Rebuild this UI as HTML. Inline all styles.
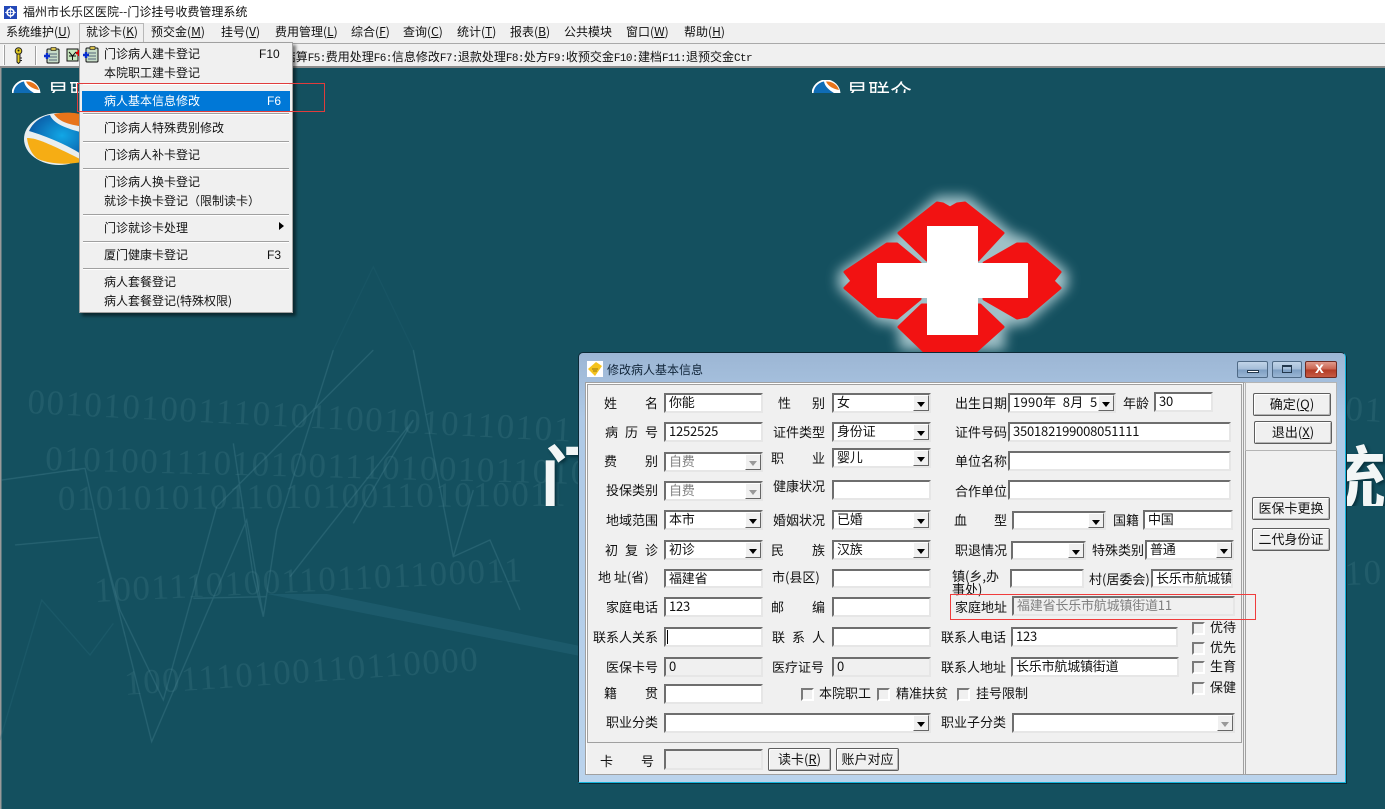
<!DOCTYPE html>
<html lang="zh-CN"><head><meta charset="utf-8"><title>福州市长乐区医院--门诊挂号收费管理系统</title>
<style>
html,body{margin:0;padding:0;width:1385px;height:809px;overflow:hidden;background:#14505f}
body{position:relative;font:12px/14px "WenQuanYi Zen Hei","Noto Sans CJK SC",sans-serif;color:#111}
div,span,b{position:absolute;box-sizing:border-box;white-space:pre}
i{font:normal 11px "Liberation Mono",monospace;letter-spacing:-.6px}
u{text-decoration:underline}
.m{top:25px;line-height:14px}
.mi{left:104px;line-height:14px}
.sep{left:83px;width:206px;height:2px;background:#a0a0a0;border-bottom:1px solid #fff}
.sc{left:269px;font:12px/14px "Liberation Sans",sans-serif}
.l{font-size:13px;line-height:14px;color:#111}
.i{background:#fff;border:2px solid;border-color:#6e6e6e #e6e6e6 #e6e6e6 #6e6e6e;font-size:13px;line-height:14px;padding-left:3px;overflow:hidden;letter-spacing:-.2px;color:#111}
.i.g{color:#808080}.i.d{background:#f0f0f0}
.a{right:0;top:0;bottom:0;width:16px;background:#f0f0f0;border:1px solid;border-color:#fff #666 #666 #fff}
.a:after{content:"";position:absolute;left:3px;top:6px;border:4px solid transparent;border-top:5px solid #000;border-bottom:0}
.a.n:after{border-top-color:#999}
.c{width:13px;height:13px;background:#f0f0f0;border:2px solid;border-color:#7a7a7a #fff #fff #7a7a7a}
.b{background:#f0f0f0;border:1px solid #5e5e5e;border-radius:2px;box-shadow:inset 1px 1px 0 #fff,inset -1px -1px 0 #b4b4b4;text-align:center;font-size:13px;line-height:20px;color:#111}
.wb{top:361px;height:17px;border:1px solid #4f6a86;border-radius:2px;background:linear-gradient(#c1d4e8,#a3bcd8 50%,#7d9ec2 51%,#9ab6d4)}
</style></head><body>

<!-- background -->
<svg style="position:absolute;left:0;top:68px" width="1385" height="741" viewBox="0 68 1385 741">
<defs><filter id="gl" x="-30%" y="-30%" width="160%" height="160%"><feGaussianBlur stdDeviation="6"/></filter>
<radialGradient id="bl" cx=".6" cy=".5" r=".6"><stop offset="0" stop-color="#11a7e6"/><stop offset="1" stop-color="#0b5ea8"/></radialGradient></defs>
<rect x="0" y="68" width="1385" height="741" fill="#14505f"/>
<rect x="0" y="68" width="1.500" height="741" fill="#9a9a9a"/>
<g font-family="Liberation Serif,serif" font-size="35" fill="#6ea2ae" opacity=".15" letter-spacing="1.500">
<text transform="translate(27,413) rotate(3)">00101010011101011001010110101</text>
<text transform="translate(45,470) rotate(1.500)">01010011101010011101001011010</text>
<text transform="translate(58,510) rotate(-.5)">010101010110101001101010011</text>
<text transform="translate(95,602) rotate(-2.800)">10011101001101101100011</text>
<text transform="translate(125,695) rotate(-4)">1001110100110110000</text>
<text transform="translate(1345,420) rotate(3)">0101</text>
<text transform="translate(1345,585) rotate(-2)">1011</text>
</g>
<g transform="translate(0,350) scale(.3333)" fill="none" stroke="#4d8796" stroke-width="4" opacity=".36">
<polyline points="5,390 255,355 300,560 455,1175 740,510 790,800 830,540 1000,0"/>
<polyline points="300,560 360,780 490,1050 650,470 1120,0"/>
<polyline points="870,680 1240,210 1060,520"/>
<polyline points="1240,0 1360,620 1470,570 1560,780"/>
<polyline points="1360,620 1420,420"/>
<polyline points="700,280 760,680 790,800"/>
<polyline points="45,585 295,562"/>
<polyline points="580,745 800,740"/>
<polyline points="0,1170 125,750 270,915 340,820" stroke="#2a6a7a"/>
<polyline points="1000,0 1120,-250 1240,0" stroke="#2f6f7f" opacity=".5"/>
</g>
<polygon points="267,594 327,594 580,646 580,656" fill="#1c5a6b"/>
<!-- top logos -->
<svg x="12" y="80" width="400" height="13" viewBox="0 0 400 13" overflow="hidden">
<circle cx="14" cy="14" r="14.500" fill="#fff"/><path d="M1.500 14A12.500 12.500 0 0 1 12 1.500C13 8 20 12 27 16L14 20Z" fill="#0f6cb5"/><path d="M14 1.500A12.500 12.500 0 0 1 27 10C21 9 16 6 14 1.500Z" fill="#e8741a"/>
<text x="35" y="20" font-family="Noto Sans CJK SC,sans-serif" font-size="22" fill="#fff">易联</text></svg>
<svg x="812" y="80" width="110" height="13" viewBox="0 0 110 13" overflow="hidden">
<circle cx="14" cy="14" r="14.500" fill="#fff"/><path d="M1.500 14A12.500 12.500 0 0 1 12 1.500C13 8 20 12 27 16L14 20Z" fill="#0f6cb5"/><path d="M14 1.500A12.500 12.500 0 0 1 27 10C21 9 16 6 14 1.500Z" fill="#e8741a"/>
<text x="34" y="20" font-family="Noto Sans CJK SC,sans-serif" font-size="22" fill="#fff">易联众</text></svg>
<!-- large logo -->
<g>
<ellipse cx="59" cy="139" rx="35" ry="26" fill="#e9eef0"/>
<path d="M29 131C33 122 42 116 50 115C53 123 64 128 84 133V156C70 146 46 136 29 131Z" fill="url(#bl)"/>
<path d="M54 114C64 112 76 112 86 116V127C70 125 59 122 54 114Z" fill="#e8741a"/>
<path d="M27 138C36 138 46 142 82 160V162C66 165 50 164 38 159C32 155 28 147 27 138Z" fill="#f6ad14"/>
</g>
<!-- cross -->
<g id="cr">
<g filter="url(#gl)" fill="#cfe6ea" opacity=".75"><polygon points="937,196 968,196 1012,233 1027,238 1068,272 1068,288 1027,324 1005,327 1005,350 900,350 897,325 878,323 838,288 838,272 887,238 897,232"/></g>
<g fill="#f21212" stroke="#f21212" stroke-width="3" stroke-linejoin="round">
<polygon points="899,233 937,203 943,204 950,208 957,204 965,203 1003,233 978,260 927,260"/>
<polygon points="887,244 897,244 920,263 920,299 897,318 878,316 845,288 852,281 845,272"/>
<polygon points="1017,244 1027,244 1060,272 1053,281 1060,288 1027,316 1017,318 984,299 984,263"/>
<polygon points="899,327 922,305 980,305 1003,327 975,352 925,352"/>
</g>
<path d="M927 226H978V263H1028V298H978V335H927V298H877V263H927Z" fill="#fff"/>
</g>
</svg>
<div style="left:540px;top:430px;width:900px;height:76px;overflow:hidden;font:bold 72px/90px 'Noto Sans CJK SC',sans-serif;letter-spacing:14px;color:#f2f6f6;text-shadow:2px 2px 3px #07303c">门诊挂号收费管理系统</div>

<!-- title bar -->
<div style="left:0;top:0;width:1385px;height:23px;background:#fff"></div>
<svg style="position:absolute;left:4px;top:6px" width="13" height="13" viewBox="0 0 13 13"><rect width="13" height="13" fill="#2348b8"/><circle cx="6.500" cy="6.500" r="3.400" fill="none" stroke="#fff" stroke-width="1.600"/><path d="M6.500 1V12M1 6.500H12" stroke="#fff" stroke-width=".8"/></svg>
<div style="left:23px;top:5px;font-size:12px">福州市长乐区医院--门诊挂号收费管理系统</div>

<!-- menu bar -->
<div style="left:0;top:23px;width:1385px;height:20px;background:#f0f0f0"></div>
<div style="left:79px;top:23px;width:65px;height:20px;border:1px solid #b8b8b8;border-bottom:0"></div>
<div class="m" style="left:6px">系统维护(<u>U</u>)</div>
<div class="m" style="left:86px">就诊卡(<u>K</u>)</div>
<div class="m" style="left:151px">预交金(<u>M</u>)</div>
<div class="m" style="left:221px">挂号(<u>V</u>)</div>
<div class="m" style="left:275px">费用管理(<u>L</u>)</div>
<div class="m" style="left:351px">综合(<u>F</u>)</div>
<div class="m" style="left:403px">查询(<u>C</u>)</div>
<div class="m" style="left:457px">统计(<u>T</u>)</div>
<div class="m" style="left:510px">报表(<u>B</u>)</div>
<div class="m" style="left:564px">公共模块</div>
<div class="m" style="left:626px">窗口(<u>W</u>)</div>
<div class="m" style="left:684px">帮助(<u>H</u>)</div>

<!-- toolbar -->
<div style="left:0;top:43px;width:1385px;height:25px;background:#f0f0f0;border-top:1px solid #a9a9a9;border-bottom:2px solid #8c8c8c"></div>
<div style="left:3px;top:45px;width:2px;height:20px;background:#fff;border-right:1px solid #a0a0a0"></div>
<div style="left:35px;top:46px;width:2px;height:19px;background:#fff;border-left:1px solid #a0a0a0"></div>
<svg style="position:absolute;left:13px;top:47px" width="11" height="17" viewBox="0 0 11 17"><circle cx="5.500" cy="4" r="3.300" fill="#e3cc22" stroke="#222"/><path d="M4 7H7V15L5.500 16.500 4 15Z" fill="#e3cc22" stroke="#222"/><path d="M7 11H9M7 13.500H9" stroke="#222"/><circle cx="5.500" cy="3.500" r="1" fill="#222"/></svg>
<svg style="position:absolute;left:44px;top:47px" width="16" height="17" viewBox="0 0 16 17"><rect x="3" y="2" width="12" height="14" rx="1" fill="#c7dcc8" stroke="#111"/><rect x="7" y="0.500" width="5" height="3" fill="#d7c04a" stroke="#111" stroke-width=".6"/><path d="M5 7H13M5 10H13M5 13H13" stroke="#567"/><path d="M0 9H6M3 6V12" stroke="#0a2fd0" stroke-width="2.400"/></svg>
<svg style="position:absolute;left:66px;top:47px" width="16" height="16" viewBox="0 0 16 16"><rect x="1" y="2" width="11" height="12" fill="#c8e8c0" stroke="#111"/><path d="M3 5L6.500 9 10 5M3 9H10M6.500 9V13" stroke="#111" fill="none"/><path d="M10 6H16M13 3V9" stroke="#d00" stroke-width="2.400"/></svg>
<div style="right:633px;top:50px;line-height:14px;font-size:12px">结算<i>F5:</i>费用处理<i>F6:</i>信息修改<i>F7:</i>退款处理<i>F8:</i>处方<i>F9:</i>收预交金<i>F10:</i>建档<i>F11:</i>退预交金<i>Ctr</i></div>

<!-- menu -->
<div style="left:79px;top:42px;width:214px;height:271px;background:#f0f0f0;border:1px solid #a0a0a0;box-shadow:3px 3px 3px rgba(0,0,0,.5)"></div>
<svg style="position:absolute;left:83px;top:46px" width="16" height="17" viewBox="0 0 16 17"><rect x="3" y="2" width="12" height="14" rx="1" fill="#c7dcc8" stroke="#111"/><rect x="7" y="0.500" width="5" height="3" fill="#d7c04a" stroke="#111" stroke-width=".6"/><path d="M5 7H13M5 10H13M5 13H13" stroke="#567"/><path d="M0 9H6M3 6V12" stroke="#0a2fd0" stroke-width="2.400"/></svg>
<div class="mi" style="top:47px">门诊病人建卡登记</div><div class="sc" style="left:259px;top:47px">F10</div>
<div class="mi" style="top:66px">本院职工建卡登记</div>
<div class="sep" style="top:83px"></div>
<div style="left:82px;top:91px;width:208px;height:20px;background:#0078d7"></div>
<div class="mi" style="top:94px;color:#fff">病人基本信息修改</div><div class="sc" style="left:267px;top:94px;color:#fff">F6</div>
<div class="sep" style="top:113px"></div>
<div class="mi" style="top:121px">门诊病人特殊费别修改</div>
<div class="sep" style="top:141px"></div>
<div class="mi" style="top:148px">门诊病人补卡登记</div>
<div class="sep" style="top:168px"></div>
<div class="mi" style="top:175px">门诊病人换卡登记</div>
<div class="mi" style="top:194px">就诊卡换卡登记（限制读卡）</div>
<div class="sep" style="top:214px"></div>
<div class="mi" style="top:221px">门诊就诊卡处理</div>
<div style="left:279px;top:222px;border:4px solid transparent;border-left:5px solid #000;border-right:0"></div>
<div class="sep" style="top:241px"></div>
<div class="mi" style="top:248px">厦门健康卡登记</div><div class="sc" style="left:267px;top:248px">F3</div>
<div class="sep" style="top:268px"></div>
<div class="mi" style="top:275px">病人套餐登记</div>
<div class="mi" style="top:294px">病人套餐登记(特殊权限)</div>
<div style="left:77px;top:83px;width:248px;height:29px;border:1px solid #e03c3c"></div>

<!-- dialog -->
<div style="left:578px;top:352px;width:768px;height:431px;border:1px solid #0c2a36;border-bottom:1px solid #12b5dc;border-right:1px solid #12b5dc;border-radius:5px 5px 0 0;box-shadow:1px 1px 0 #0c2a36;background:linear-gradient(#9cb6d4,#aec9e6 15%,#bad3ec)"></div>
<svg style="position:absolute;left:587px;top:361px" width="16" height="16" viewBox="0 0 16 16"><rect width="16" height="16" fill="#fff"/><path d="M1 8L9 1 15 5 8 15Z" fill="#f4c31e"/><path d="M5 8H11M6 10H10" stroke="#9a7a10"/></svg>
<div style="left:607px;top:363px;font-size:12px;color:#12263a">修改病人基本信息</div>
<div class="wb" style="left:1237px;width:31px"><span style="left:9px;top:8px;width:12px;height:3px;border:1px solid #23384d;background:#fff"></span></div>
<div class="wb" style="left:1272px;width:30px"><span style="left:9px;top:3px;width:10px;height:8px;border:1px solid #23384d;border-top-width:2px"></span></div>
<div class="wb" style="left:1305px;width:32px;border-color:#6d2a22;background:linear-gradient(#e09a8c,#c9604c 50%,#b23a24 51%,#c65a44)"><span style="left:9px;top:-1px;font:bold 16px/16px 'Liberation Sans',sans-serif;color:#fff">x</span></div>

<div style="left:585px;top:382px;width:752px;height:393px;background:#f0f0f0;border:1px solid #a8a8a8"></div>
<div style="left:585px;top:382px;width:659px;height:393px;border:1px solid #a0a0a0;box-shadow:inset 1px 1px 0 #fff"></div>
<div style="left:587px;top:384px;width:655px;height:359px;border:1px solid #a0a0a0"></div>
<div style="left:1245px;top:382px;width:92px;height:393px;border:1px solid #a0a0a0"></div>
<div style="left:1245px;top:382px;width:92px;height:69px;border:1px solid #b4b4b4"></div>

<!-- col 1 -->
<div class="l" style="left:604px;top:396px;letter-spacing:28px">姓名</div><div class="i" style="left:664px;top:393px;width:99px;height:20px">你能</div>
<div class="l" style="left:605px;top:425px;letter-spacing:7px">病历号</div><div class="i" style="left:664px;top:422px;width:99px;height:20px">1252525</div>
<div class="l" style="left:604px;top:454px;letter-spacing:28px">费别</div><div class="i g" style="left:664px;top:452px;width:99px;height:20px">自费<b class="a n"></b></div>
<div class="l" style="left:606px;top:483px">投保类别</div><div class="i g" style="left:664px;top:481px;width:99px;height:20px">自费<b class="a n"></b></div>
<div class="l" style="left:606px;top:513px">地域范围</div><div class="i" style="left:664px;top:510px;width:99px;height:20px">本市<b class="a"></b></div>
<div class="l" style="left:605px;top:543px;letter-spacing:7px">初复诊</div><div class="i" style="left:664px;top:540px;width:99px;height:20px">初诊<b class="a"></b></div>
<div class="l" style="left:598px;top:570px">地 址(省)</div><div class="i" style="left:664px;top:569px;width:99px;height:19px">福建省</div>
<div class="l" style="left:606px;top:600px">家庭电话</div><div class="i" style="left:664px;top:597px;width:99px;height:20px">123</div>
<div class="l" style="left:593px;top:630px">联系人关系</div><div class="i" style="left:664px;top:627px;width:99px;height:20px"><span style="left:1px;top:1px;width:1px;height:14px;background:#000"></span></div>
<div class="l" style="left:606px;top:660px">医保卡号</div><div class="i d" style="left:664px;top:657px;width:99px;height:20px">0</div>
<div class="l" style="left:604px;top:686px;letter-spacing:28px">籍贯</div><div class="i" style="left:664px;top:684px;width:99px;height:20px"></div>
<div class="l" style="left:606px;top:715px">职业分类</div><div class="i" style="left:664px;top:713px;width:267px;height:20px"><b class="a"></b></div>
<div class="l" style="left:600px;top:754px;letter-spacing:28px">卡号</div><div class="i d" style="left:664px;top:749px;width:99px;height:21px"></div>
<div class="b" style="left:768px;top:748px;width:63px;height:23px">读卡(<u>R</u>)</div>
<div class="b" style="left:836px;top:748px;width:63px;height:23px">账户对应</div>

<!-- col 2 -->
<div class="l" style="left:778px;top:396px;letter-spacing:21px">性别</div><div class="i" style="left:832px;top:393px;width:99px;height:20px">女<b class="a"></b></div>
<div class="l" style="left:773px;top:425px">证件类型</div><div class="i" style="left:832px;top:422px;width:99px;height:20px">身份证<b class="a"></b></div>
<div class="l" style="left:771px;top:451px;letter-spacing:28px">职业</div><div class="i" style="left:832px;top:448px;width:99px;height:20px">婴儿<b class="a"></b></div>
<div class="l" style="left:773px;top:479px">健康状况</div><div class="i" style="left:832px;top:480px;width:99px;height:20px"></div>
<div class="l" style="left:773px;top:513px">婚姻状况</div><div class="i" style="left:832px;top:510px;width:99px;height:20px">已婚<b class="a"></b></div>
<div class="l" style="left:771px;top:543px;letter-spacing:28px">民族</div><div class="i" style="left:832px;top:540px;width:99px;height:20px">汉族<b class="a"></b></div>
<div class="l" style="left:772px;top:570px">市(县区)</div><div class="i" style="left:832px;top:569px;width:99px;height:19px"></div>
<div class="l" style="left:771px;top:600px;letter-spacing:28px">邮编</div><div class="i" style="left:832px;top:597px;width:99px;height:20px"></div>
<div class="l" style="left:772px;top:630px;letter-spacing:7px">联系人</div><div class="i" style="left:832px;top:627px;width:99px;height:20px"></div>
<div class="l" style="left:772px;top:660px">医疗证号</div><div class="i d" style="left:832px;top:657px;width:99px;height:20px">0</div>
<div class="c" style="left:801px;top:688px"></div><div class="l" style="left:819px;top:686px">本院职工</div>
<div class="c" style="left:877px;top:688px"></div><div class="l" style="left:896px;top:686px">精准扶贫</div>
<div class="c" style="left:957px;top:688px"></div><div class="l" style="left:976px;top:686px">挂号限制</div>

<!-- col 3 -->
<div class="l" style="left:955px;top:396px">出生日期</div><div class="i" style="left:1008px;top:393px;width:108px;height:20px;letter-spacing:.3px">1990年  8月  5日<b class="a"></b></div>
<div class="l" style="left:1123px;top:396px">年龄</div><div class="i" style="left:1154px;top:392px;width:59px;height:20px">30</div>
<div class="l" style="left:955px;top:425px">证件号码</div><div class="i" style="left:1008px;top:422px;width:223px;height:20px">350182199008051111</div>
<div class="l" style="left:955px;top:454px">单位名称</div><div class="i" style="left:1008px;top:451px;width:223px;height:20px"></div>
<div class="l" style="left:955px;top:484px">合作单位</div><div class="i" style="left:1008px;top:480px;width:223px;height:20px"></div>
<div class="l" style="left:954px;top:513px;letter-spacing:27px">血型</div><div class="i" style="left:1012px;top:511px;width:94px;height:19px"><b class="a"></b></div>
<div class="l" style="left:1113px;top:513px">国籍</div><div class="i" style="left:1143px;top:510px;width:90px;height:20px">中国</div>
<div class="l" style="left:955px;top:543px">职退情况</div><div class="i" style="left:1011px;top:541px;width:75px;height:19px"><b class="a"></b></div>
<div class="l" style="left:1092px;top:543px">特殊类别</div><div class="i" style="left:1145px;top:540px;width:89px;height:20px">普通<b class="a"></b></div>
<div class="l" style="left:952px;top:569px;line-height:13px">镇(乡,办
事处)</div><div class="i" style="left:1010px;top:569px;width:74px;height:19px"></div>
<div class="l" style="left:1089px;top:572px">村(居委会)</div><div class="i" style="left:1151px;top:569px;width:82px;height:19px">长乐市航城镇</div>
<div class="l" style="left:955px;top:600px">家庭地址</div><div class="i g" style="left:1012px;top:596px;width:223px;height:20px;background:#f0f0f0">福建省长乐市航城镇街道11</div>
<div class="l" style="left:941px;top:630px">联系人电话</div><div class="i" style="left:1011px;top:627px;width:167px;height:20px">123</div>
<div class="l" style="left:941px;top:660px">联系人地址</div><div class="i" style="left:1011px;top:657px;width:168px;height:20px">长乐市航城镇街道</div>
<div class="l" style="left:941px;top:715px">职业子分类</div><div class="i" style="left:1012px;top:713px;width:223px;height:20px"><b class="a n"></b></div>
<div class="c" style="left:1192px;top:622px"></div><div class="l" style="left:1210px;top:620px">优待</div>
<div class="c" style="left:1192px;top:642px"></div><div class="l" style="left:1210px;top:640px">优先</div>
<div class="c" style="left:1192px;top:661px"></div><div class="l" style="left:1210px;top:659px">生育</div>
<div class="c" style="left:1192px;top:682px"></div><div class="l" style="left:1210px;top:680px">保健</div>
<div style="left:950px;top:594px;width:306px;height:26px;border:1px solid #f03c3c"></div>

<!-- right buttons -->
<div class="b" style="left:1253px;top:393px;width:78px;height:23px">确定(<u>Q</u>)</div>
<div class="b" style="left:1254px;top:421px;width:78px;height:23px">退出(<u>X</u>)</div>
<div class="b" style="left:1252px;top:497px;width:78px;height:23px">医保卡更换</div>
<div class="b" style="left:1252px;top:528px;width:78px;height:23px">二代身份证</div>
</body></html>
